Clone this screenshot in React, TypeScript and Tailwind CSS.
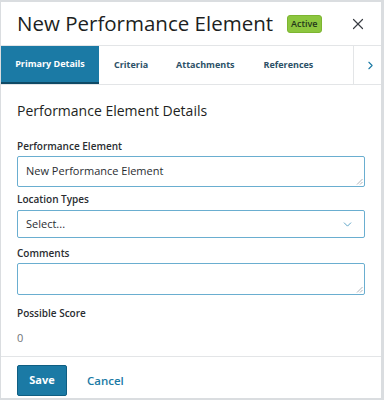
import { X, ChevronRight, ChevronDown } from "lucide-react";

const tabs = ["Criteria", "Attachments", "References"];

export default function App() {
  return (
    <div
      className="w-[384px] h-[400px] flex flex-col bg-white border-t-2 border-r-[3px] border-b-2 border-l border-[#dadde0] text-[#1f2328] overflow-hidden"
      style={{ fontFamily: '"Open Sans", sans-serif' }}
    >
      {/* Header */}
      <header className="h-[44px] shrink-0 flex items-center pl-4 pr-4 border-b border-[#e3e5e7]">
        <h1 className="text-[20.5px] leading-none text-[#1d1f22] whitespace-nowrap">New Performance Element</h1>
        <span className="ml-[14px] mt-[1px] h-[18px] px-[3px] flex items-center rounded-[3px] bg-[#8cc63f] border border-[#7db531] text-[9px] font-semibold text-[#24381a]">
          Active
        </span>
        <button className="ml-auto -mr-[2px] text-[#3a3e44]">
          <X size={18} strokeWidth={1.6} />
        </button>
      </header>

      {/* Tabs */}
      <nav className="h-[39px] shrink-0 flex border-b border-[#e3e5e7]">
        <div className="w-[98px] flex items-center justify-center bg-[#1b7aa5] border-b-2 border-[#0f4a66] text-white text-[9px] font-bold">
          Primary Details
        </div>
        <div className="flex-1 flex items-center text-[9px] font-bold text-[#2c5167]">
          <span className="ml-[15px]">{tabs[0]}</span>
          <span className="ml-[28px]">{tabs[1]}</span>
          <span className="ml-[29px]">{tabs[2]}</span>
        </div>
        <div className="w-[28px] flex items-center justify-center pl-[6px] border-l border-[#e3e5e7] text-[#1b7aa5]">
          <ChevronRight size={13} strokeWidth={2} />
        </div>
      </nav>

      {/* Body */}
      <main className="flex-1 flex flex-col px-4 pt-[15px]">
        <h2 className="text-[14px] leading-[22px] text-[#1d1f22]">Performance Element Details</h2>

        <label className="mt-[16px] text-[10px] font-semibold text-[#2a2d31] leading-[16px]">Performance Element</label>
        <div className="relative mt-[2px] h-[31px] border border-[#6aaed0] rounded-[2px] flex items-center pl-2 text-[11px] text-[#2a2d31]">
          New Performance Element
          <ResizeGrip />
        </div>

        <label className="mt-[4px] text-[10px] font-semibold text-[#2a2d31] leading-[16px]">Location Types</label>
        <div className="mt-[3px] h-[28px] border border-[#6aaed0] rounded-[2px] flex items-center pl-2 pr-[10px] text-[11px] text-[#2a2d31]">
          Select...
          <ChevronDown size={13} strokeWidth={1.5} className="ml-auto text-[#3a8fba]" />
        </div>

        <label className="mt-[7px] text-[10px] font-semibold text-[#2a2d31] leading-[16px]">Comments</label>
        <div className="relative mt-[2px] h-[32px] border border-[#6aaed0] rounded-[2px]">
          <ResizeGrip />
        </div>

        <label className="mt-[10px] text-[10px] font-semibold text-[#2a2d31] leading-[16px]">Possible Score</label>
        <div className="mt-[8px] text-[11px] text-[#707478] leading-[18px]">0</div>
      </main>

      {/* Footer */}
      <footer className="h-[42px] shrink-0 flex items-start pt-[8px] px-4 border-t border-[#e3e5e7]">
        <button className="h-[31px] w-[50px] bg-[#1b7aa5] border border-[#0f5e82] rounded-[2px] text-white text-[11px] font-bold">
          Save
        </button>
        <button className="ml-[20px] h-[31px] text-[11.5px] text-[#1b7aa5] font-semibold">Cancel</button>
      </footer>
    </div>
  );
}

function ResizeGrip() {
  return (
    <svg className="absolute right-[1px] bottom-[1px]" width="7" height="7" viewBox="0 0 7 7">
      <path d="M6.5 1 L1 6.5 M6.5 4 L4 6.5" stroke="#9aa0a6" strokeWidth="0.8" fill="none" />
    </svg>
  );
}
